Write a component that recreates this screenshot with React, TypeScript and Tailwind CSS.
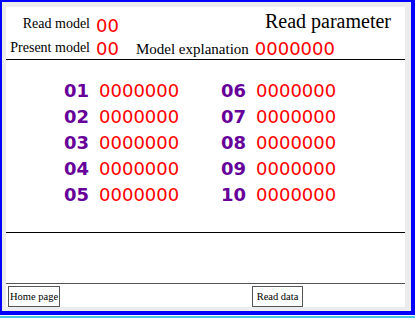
import React from "react";

const serif = "font-['Liberation_Serif',serif]";
const sans = "font-['DejaVu_Sans',sans-serif]";

const left = ["01", "02", "03", "04", "05"];
const right = ["06", "07", "08", "09", "10"];

const ParamRow = ({ num }: { num: string }) => (
  <div className="flex gap-[10px] leading-[26px] text-[18px]">
    <span className={`${sans} font-bold text-[#660099]`}>{num}</span>
    <span className={`${sans} text-[#ff0000]`}>0000000</span>
  </div>
);

const App = () => {
  return (
    <div className="w-[415px] h-[318px] bg-white flex flex-col">
      <div className="h-[315px] border-l-2 border-t-2 border-r-4 border-b-4 border-[#0000ff] bg-[#ececec] pl-1 pt-[5px] pr-[6px] pb-1">
        <div className="bg-white h-full flex flex-col text-black">
          {/* header */}
          <div className="h-[53px] border-b border-black flex flex-col">
            <div className="h-[26px] flex items-start">
              <span className={`${serif} w-[84px] text-right text-[14px] leading-[14px] pt-[10px]`}>
                Read model
              </span>
              <span className={`${sans} ml-[6px] text-[18px] leading-[18px] pt-[10px] text-[#ff0000]`}>
                00
              </span>
              <span className={`${serif} ml-auto mr-[14px] text-[20px] leading-[20px] pt-[4px]`}>
                Read parameter
              </span>
            </div>
            <div className="flex items-start">
              <span className={`${serif} w-[84px] text-right text-[14px] leading-[14px] pt-[8px] whitespace-nowrap`}>
                Present model
              </span>
              <span className={`${sans} ml-[6px] text-[18px] leading-[18px] pt-[7px] text-[#ff0000]`}>
                00
              </span>
              <span className={`${serif} ml-[17px] text-[15px] leading-[15px] pt-[9px] whitespace-nowrap`}>
                Model explanation
              </span>
              <span className={`${sans} ml-[6px] text-[18px] leading-[18px] pt-[7px] text-[#ff0000]`}>
                0000000
              </span>
            </div>
          </div>

          {/* parameters */}
          <div className="h-[173px] border-b border-black pt-[18px] pl-[58px] flex">
            <div className="w-[157px] flex flex-col">
              {left.map((n) => (
                <ParamRow key={n} num={n} />
              ))}
            </div>
            <div className="flex flex-col">
              {right.map((n) => (
                <ParamRow key={n} num={n} />
              ))}
            </div>
          </div>

          <div className="h-[51px] border-b border-[#555555]" />

          {/* buttons */}
          <div className="flex pt-[2px]">
            <button
              className={`${serif} ml-[2px] w-[52px] h-[21px] border border-[#555555] text-[10.5px] leading-[19px] text-center whitespace-nowrap`}
            >
              Home page
            </button>
            <button
              className={`${serif} ml-[192px] w-[51px] h-[21px] border border-[#555555] text-[10.5px] leading-[19px] text-center whitespace-nowrap`}
            >
              Read data
            </button>
          </div>
        </div>
      </div>
      <div className="h-px bg-white" />
      <div className="h-[2px] bg-[#48c8e0]" />
    </div>
  );
};

export default App;
